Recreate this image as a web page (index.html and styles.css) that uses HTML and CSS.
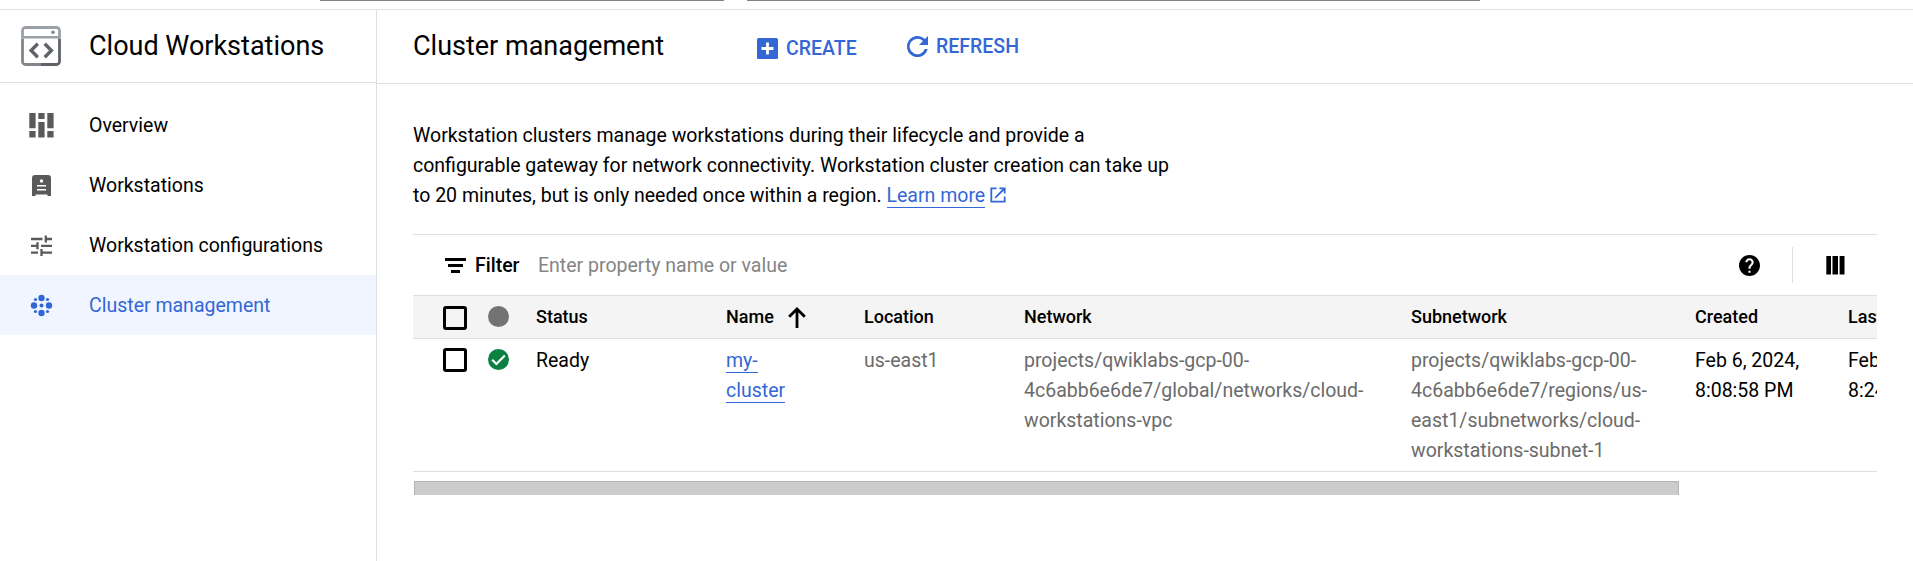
FILE: index.html
```html
<!DOCTYPE html>
<html lang="en">
<head>
<meta charset="utf-8">
<title>Cloud Workstations</title>
<link rel="stylesheet" href="styles.css">
</head>
<body>
<div class="topbar"><span class="topbar-picker"></span><span class="topbar-search"></span></div>
<div class="shell">
  <nav class="sidebar">
    <div class="product">
      <svg class="product-icon" width="40" height="40" viewBox="0 0 40 40" fill="none">
        <path d="M1.500 12V4.500a3 3 0 0 1 3-3h31a3 3 0 0 1 3 3V12" stroke="#9aa0a6" stroke-width="2.800"/>
        <path d="M1.500 11.200h37" stroke="#9aa0a6" stroke-width="2.600"/>
        <path d="M1.500 12.500v23a3 3 0 0 0 3 3H20" stroke="#80868b" stroke-width="2.800"/>
        <path d="M38.500 12.500v23a3 3 0 0 1-3 3H20" stroke="#5f6368" stroke-width="2.800"/>
        <circle cx="32" cy="6.300" r="1.800" fill="#80868b"/>
        <path d="M16.800 17.800l-6.700 6.700 6.700 6.700M23.700 17.800l6.700 6.700-6.700 6.700" stroke="#5f6368" stroke-width="3.400"/>
      </svg>
      <span>Cloud Workstations</span>
    </div>
    <ul class="nav">
      <li class="nav-item">
        <svg width="25" height="25" viewBox="0 0 25 25" fill="#5a5a5a"><path d="M.3 0h6.300v15.300H.3zM.3 18h6.300v6.500H.3zM9.300 0h6.300v6H9.300zM9.300 9h6.300v15.500H9.300zM18.300 0h6.300v15.300h-6.300zM18.300 18h6.300v6.500h-6.300z"/></svg>
        <span>Overview</span>
      </li>
      <li class="nav-item">
        <svg width="25" height="25" viewBox="0 0 25 25"><path fill="#5a5a5a" d="M6 2h13a3 3 0 0 1 3 3v18h-3.500v-1.500h-12V23H3V5a3 3 0 0 1 3-3z"/><circle cx="12.500" cy="8" r="1.700" fill="#fff"/><path d="M8 12.700h9M8 16.800h9" stroke="#fff" stroke-width="1.500"/></svg>
        <span>Workstations</span>
      </li>
      <li class="nav-item">
        <svg width="25" height="25" viewBox="0 0 25 25" stroke="#5a5a5a" stroke-width="2.300"><path d="M2 6h11.500M16 6h7M16.800 2.500v7M2 12.800h5.500M12 12.800H23M8.500 9.300v7M2 19.600h7M12.500 19.600H23M12.500 16v7"/></svg>
        <span>Workstation configurations</span>
      </li>
      <li class="nav-item nav-item-active">
        <svg width="25" height="25" viewBox="0 0 25 25" fill="#3367d6"><circle cx="12.500" cy="5" r="3.200"/><circle cx="12.500" cy="20" r="3.200"/><circle cx="5" cy="12.500" r="3.200"/><circle cx="20" cy="12.500" r="3.200"/><circle cx="12.500" cy="12.500" r="2"/><circle cx="6.500" cy="6.500" r="1.600"/><circle cx="18.500" cy="6.500" r="1.600"/><circle cx="6.500" cy="18.500" r="1.600"/><circle cx="18.500" cy="18.500" r="1.600"/></svg>
        <span>Cluster management</span>
      </li>
    </ul>
  </nav>
  <main class="main">
    <header class="page-header">
      <h1 class="page-title">Cluster management</h1>
      <span class="action action-create">
        <svg width="21" height="21" viewBox="0 0 21 21"><rect width="21" height="21" rx="1.500" fill="#3367d6"/><path d="M10.500 4.500v12M4.500 10.500h12" stroke="#fff" stroke-width="2.800"/></svg>
        <span>CREATE</span>
      </span>
      <span class="action action-refresh">
        <svg width="21" height="21" viewBox="0 0 21 21"><path d="M17.900 3.100A10.500 10.500 0 1 0 20.700 13.100H17.800A7.800 7.800 0 1 1 16 5L12 9H21V0z" fill="#3367d6"/></svg>
        <span>REFRESH</span>
      </span>
    </header>
    <section class="content">
      <p class="intro">Workstation clusters manage workstations during their lifecycle and provide a<br>configurable gateway for network connectivity. Workstation cluster creation can take up<br>to 20 minutes, but is only needed once within a region. <a class="link">Learn more</a><svg class="external" width="16" height="16" viewBox="0 0 17 17" fill="none" stroke="#3367d6" stroke-width="1.900"><path d="M7 1.400H1.400v14.200h14.200V10M10 1.400h5.600V7M15.400 1.600L5.500 11.500"/></svg></p>
      <div class="table">
        <div class="filter">
          <svg width="21" height="15" viewBox="0 0 21 15"><path d="M0 0h21v3H0zM3 6h15v3H3zM6 12h9v3H6z"/></svg>
          <span class="filter-label">Filter</span>
          <span class="filter-hint">Enter property name or value</span>
          <svg class="help" width="21" height="21" viewBox="2 2 20 20"><path d="M12 2C6.480 2 2 6.480 2 12s4.480 10 10 10 10-4.480 10-10S17.520 2 12 2zm1 17h-2v-2h2v2zm2.070-7.750l-.9.920C13.450 12.900 13 13.500 13 15h-2v-.5c0-1.100.45-2.100 1.170-2.830l1.240-1.260c.37-.36.59-.86.59-1.410 0-1.100-.9-2-2-2s-2 .9-2 2H8c0-2.210 1.790-4 4-4s4 1.790 4 4c0 .88-.36 1.680-.93 2.250z"/></svg>
          <span class="divider"></span>
          <svg width="19" height="19" viewBox="0 0 19 19"><path d="M.3 0H5v18.500H.3zM6.500 0h5.500v18.500H6.500zM13.600 0h4.900v18.500h-4.900z"/></svg>
        </div>
        <div class="row row-head">
          <span class="checkbox"></span>
          <span class="dot"></span>
          <span>Status</span>
          <span class="sorted">Name<svg width="18" height="21" viewBox="0 0 18 21" fill="none" stroke="#000" stroke-width="2.800"><path d="M9 21V2.500M1.200 9.800L9 2l7.800 7.800"/></svg></span>
          <span>Location</span>
          <span>Network</span>
          <span>Subnetwork</span>
          <span>Created</span>
          <span>Last</span>
        </div>
        <div class="row row-body">
          <span class="checkbox"></span>
          <svg class="ready" width="21" height="21" viewBox="0 0 21 21"><circle cx="10.500" cy="10.500" r="10.500" fill="#0b8043"/><path d="M4.200 10.800l4.200 4.200L16.800 6.500" fill="none" stroke="#fff" stroke-width="2.200"/></svg>
          <span>Ready</span>
          <span><a class="link">my-<br>cluster</a></span>
          <span class="muted">us-east1</span>
          <span class="muted">projects/qwiklabs-gcp-00-<br>4c6abb6e6de7/global/networks/cloud-<br>workstations-vpc</span>
          <span class="muted">projects/qwiklabs-gcp-00-<br>4c6abb6e6de7/regions/us-<br>east1/subnetworks/cloud-<br>workstations-subnet-1</span>
          <span>Feb 6, 2024,<br>8:08:58 PM</span>
          <span>Feb<br>8:24</span>
        </div>
      </div>
      <div class="scrollbar"></div>
    </section>
  </main>
</div>
</body>
</html>
```
FILE: styles.css
```css
* { box-sizing: border-box; }
body {
  margin: 0;
  height: 561px;
  overflow: hidden;
  display: flex;
  flex-direction: column;
  background: #fff;
  color: #000;
  font: 19.5px/30px Roboto, sans-serif;
}
svg { display: block; flex: none; }
.topbar {
  height: 10px;
  flex: none;
  display: flex;
  gap: 23px;
  padding-left: 320px;
  border-bottom: 1px solid #dedede;
}
.topbar-picker, .topbar-search { height: 1px; background: #80838b; }
.topbar-picker { width: 404px; }
.topbar-search { width: 733px; }
.shell { flex: 1; display: flex; min-height: 0; }
.sidebar { width: 377px; flex: none; border-right: 1px solid #dedede; }
.product {
  height: 73px;
  display: flex;
  align-items: center;
  gap: 28px;
  padding: 0 0 2px 21px;
  border-bottom: 1px solid #dedede;
  font-size: 27px;
}
.product > span { padding-top: 1px; }
.product-icon { margin-top: 2px; }
.nav { list-style: none; margin: 0; padding: 12px 0 0; }
.nav-item { height: 60px; display: flex; align-items: center; gap: 35px; padding-left: 29px; }
.nav-item > span { padding-top: 2px; }
.nav-item-active { background: #f0f5ff; color: #3367d6; }
.main { flex: 1; min-width: 0; }
.page-header {
  height: 74px;
  display: flex;
  align-items: center;
  padding-left: 36px;
  border-bottom: 1px solid #dedede;
}
.page-title { margin: 0; width: 344px; font-size: 27px; font-weight: 400; padding-bottom: 2px; }
.action { display: flex; align-items: center; color: #3367d6; font-weight: 500; }
.action > span { padding-top: 2px; }
.action-create { width: 150px; gap: 8px; padding-top: 3px; }
.action-refresh { gap: 8px; padding-bottom: 1px; }
.content { padding: 37px 36px 0; }
.intro { margin: 0; height: 113px; white-space: nowrap; }
.link { color: #3367d6; border-bottom: 1px solid #3367d6; }
.external { display: inline-block; margin-left: 5px; vertical-align: -1px; }
.table { overflow: hidden; border-top: 1px solid #dedede; }
.filter { height: 60px; display: flex; align-items: center; padding: 0 32px; }
.filter-label { width: 63px; margin-left: 9px; padding-top: 2px; font-weight: 500; }
.filter-hint { flex: 1; padding-top: 2px; color: #858585; }
.divider { width: 1px; height: 36px; margin: 0 33px 0 32px; background: #dedede; }
.row {
  width: 1600px;
  display: grid;
  grid-template-columns: 45px 48px 190px 138px 160px 387px 284px 153px 165px;
  padding-left: 30px;
  border-top: 1px solid #dedede;
}
.row-head { height: 43px; align-items: center; background: #f4f4f4; font-size: 18px; font-weight: 500; }
.row-body { height: 134px; padding-top: 7px; border-bottom: 1px solid #dedede; }
.checkbox { width: 24px; height: 24px; border: 3px solid #000; border-radius: 3px; }
.row-head .checkbox { margin-top: 2px; }
.row-body .checkbox { margin-top: 2px; }
.dot { width: 21px; height: 21px; margin-bottom: 1px; border-radius: 50%; background: #737373; }
.ready { margin-top: 3px; }
.sorted { display: flex; align-items: center; gap: 14px; }
.muted { color: #6b6b6b; }
.scrollbar {
  width: 1265px;
  height: 14px;
  margin: 9px 0 0 1px;
  background: #ccc;
  border: 1px solid #b5b5b5;
  border-bottom: 0;
}
```
